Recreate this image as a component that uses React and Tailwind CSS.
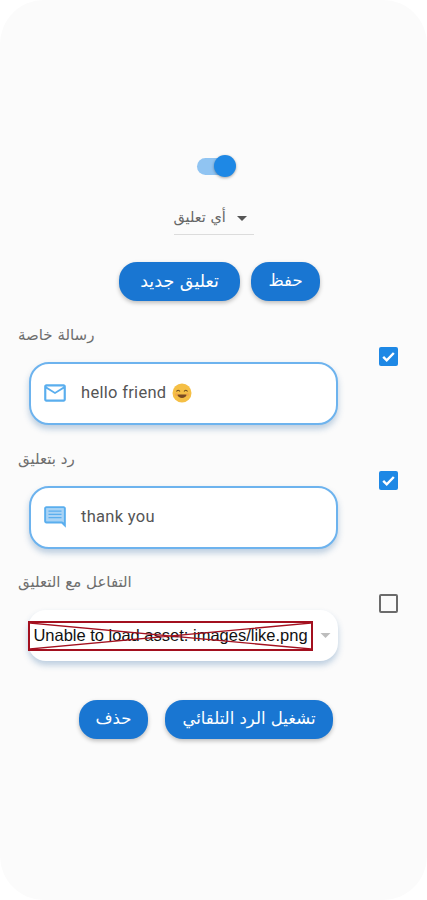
import React from 'react';

const font = { fontFamily: '"DejaVu Sans", sans-serif' };

function Check({ checked }) {
    if (!checked) {
        return <div className="w-[19px] h-[19px] rounded-[2px] border-2 border-[#6b6b6b]" />;
    }
    return (
        <div className="w-[19px] h-[19px] rounded-[2px] bg-[#1e88e5] flex items-center justify-center">
            <svg viewBox="0 0 24 24" className="w-[17px] h-[17px]" fill="none" stroke="white" strokeWidth="3.4">
                <path d="M4.5 12.5l5 5L19.5 7" />
            </svg>
        </div>
    );
}

function MailIcon() {
    return (
        <svg viewBox="0 0 24 24" className="w-[26px] h-[26px] shrink-0" fill="#5aaeee">
            <path d="M20 4H4c-1.1 0-1.99.9-1.99 2L2 18c0 1.1.9 2 2 2h16c1.1 0 2-.9 2-2V6c0-1.1-.9-2-2-2zm0 14H4V8l8 5 8-5v10zm-8-7L4 6h16l-8 5z" />
        </svg>
    );
}

function MessageIcon() {
    return (
        <svg viewBox="0 0 24 24" className="w-[26px] h-[26px] shrink-0 -scale-x-100" fill="#5aaeee">
            <path d="M4 4h16v12H5.170L4 17.170V4z" fill="#a9d3f5" />
            <path d="M20 2H4c-1.100 0-1.990.900-1.990 2L2 22l4-4h14c1.100 0 2-.900 2-2V4c0-1.100-.900-2-2-2zm0 14H5.170L4 17.170V4h16v12zM6 12h12v1.200H6zm0-3h12v1.200H6zm0-3h12v1.200H6z" />
        </svg>
    );
}

function Smile() {
    return (
        <svg viewBox="0 0 20 20" className="w-[20px] h-[20px] ml-[6px]">
            <circle cx="10" cy="10" r="9.500" fill="#f5bf45" />
            <path d="M4.500 8.500c.800-1.600 2.600-1.600 3.400 0M12.100 8.500c.800-1.600 2.600-1.600 3.400 0" fill="none" stroke="#6b4a1e" strokeWidth="1.100" />
            <path d="M5 11.500c1.500 4.600 8.500 4.600 10 0z" fill="#7a4a22" />
            <circle cx="4.500" cy="11.500" r="1.600" fill="#f2a24e" opacity="0.7" />
            <circle cx="15.500" cy="11.500" r="1.600" fill="#f2a24e" opacity="0.7" />
        </svg>
    );
}

function Pill({ children, className }) {
    return (
        <button
            style={font}
            className={`h-[39px] rounded-[18px] bg-[#1976d2] text-white font-medium shadow-[0_2px_4px_rgba(0,0,0,0.25)] ${className}`}
        >
            {children}
        </button>
    );
}

function Label({ children }) {
    return (
        <div style={font} dir="rtl" className="h-[20px] leading-[20px] text-[15px] text-[#6e6e6e] text-left w-fit ml-[18px]">
            {children}
        </div>
    );
}

function InputRow({ label, icon, checked, children }) {
    return (
        <div className="flex">
            <div className="w-[379px]">
                <Label>{label}</Label>
                <div className="mt-[17px] ml-[29px] w-[309px] h-[63px] rounded-[20px] bg-white border-2 border-[#6db3ee] shadow-[0_4px_6px_rgba(40,100,160,0.3)] flex items-center pl-[11px] pb-[1px]">
                    {icon}
                    <div style={{ fontFamily: 'Roboto, sans-serif' }} className="ml-[13px] text-[16.500px] text-[#555] flex items-center tracking-[0.3px]">
                        {children}
                    </div>
                </div>
            </div>
            <div className="pt-[22px]">
                <Check checked={checked} />
            </div>
        </div>
    );
}

export default function App() {
    return (
        <div className="w-[427px] h-[900px] bg-white overflow-hidden">
            <div className="w-full h-full rounded-[44px] bg-[#fbfbfb] pt-[154px]">
                {/* toggle */}
                <div className="flex justify-center">
                    <div className="relative w-[34px] h-[24px] flex items-center">
                        <div className="w-full h-[17px] rounded-full bg-[#90c4f2]" />
                        <div className="absolute right-[-5px] top-[1px] w-[22px] h-[22px] rounded-full bg-[#1e88e5] shadow-[0_1px_3px_rgba(0,0,0,0.35)]" />
                    </div>
                </div>

                {/* dropdown */}
                <div className="mt-[24px] flex justify-center">
                    <div className="w-[80px] h-[33px] border-b border-[#dcdcdc] flex items-center justify-between pr-[7px]">
                        <span style={font} dir="rtl" className="text-[14.500px] text-[#666]">أي تعليق</span>
                        <svg viewBox="0 0 10 5" className="w-[10px] h-[5px]" fill="#555">
                            <path d="M0 0h10L5 5z" />
                        </svg>
                    </div>
                </div>

                <div className="mt-[27px] flex pl-[119px] gap-[11px]">
                    <Pill className="w-[121px] text-[17.500px]">تعليق جديد</Pill>
                    <Pill className="w-[69px] text-[16.500px]">حفظ</Pill>
                </div>

                <div className="mt-[24px]">
                    <InputRow label="رسالة خاصة" icon={<MailIcon />} checked>
                        hello friend <Smile />
                    </InputRow>
                </div>
                <div className="mt-[24px]">
                    <InputRow label="رد بتعليق" icon={<MessageIcon />} checked>
                        thank you
                    </InputRow>
                </div>

                {/* reaction row */}
                <div className="mt-[23px] flex">
                    <div className="w-[379px]">
                        <Label>التفاعل مع التعليق</Label>
                        <div className="mt-[18px] ml-[28px] w-[310px] h-[51px] rounded-[18px] bg-white shadow-[0_4px_6px_rgba(40,100,160,0.3)] flex items-center">
                            <div className="relative w-[285px] h-[30px] border-2 border-[#a3101f] flex items-center justify-center shrink-0">
                                <span style={{ fontFamily: '"Liberation Sans", sans-serif' }} className="text-[16.500px] text-[#111] whitespace-nowrap">
                                    Unable to load asset: images/like.png
                                </span>
                                <svg viewBox="0 0 281 26" preserveAspectRatio="none" className="absolute inset-0 w-full h-full">
                                    <path d="M0 0L281 26M281 0L0 26" stroke="#a3101f" strokeWidth="1.300" />
                                </svg>
                            </div>
                            <svg viewBox="0 0 10 5" className="w-[11px] h-[5px] ml-[7px]" fill="#bdbdbd">
                                <path d="M0 0h10L5 5z" />
                            </svg>
                        </div>
                    </div>
                    <div className="pt-[22px]">
                        <Check checked={false} />
                    </div>
                </div>

                <div className="mt-[39px] flex pl-[79px] gap-[17px]">
                    <Pill className="w-[69px] text-[16.500px]">حذف</Pill>
                    <Pill className="w-[168px] text-[16.500px]">تشغيل الرد التلقائي</Pill>
                </div>
            </div>
        </div>
    );
}
